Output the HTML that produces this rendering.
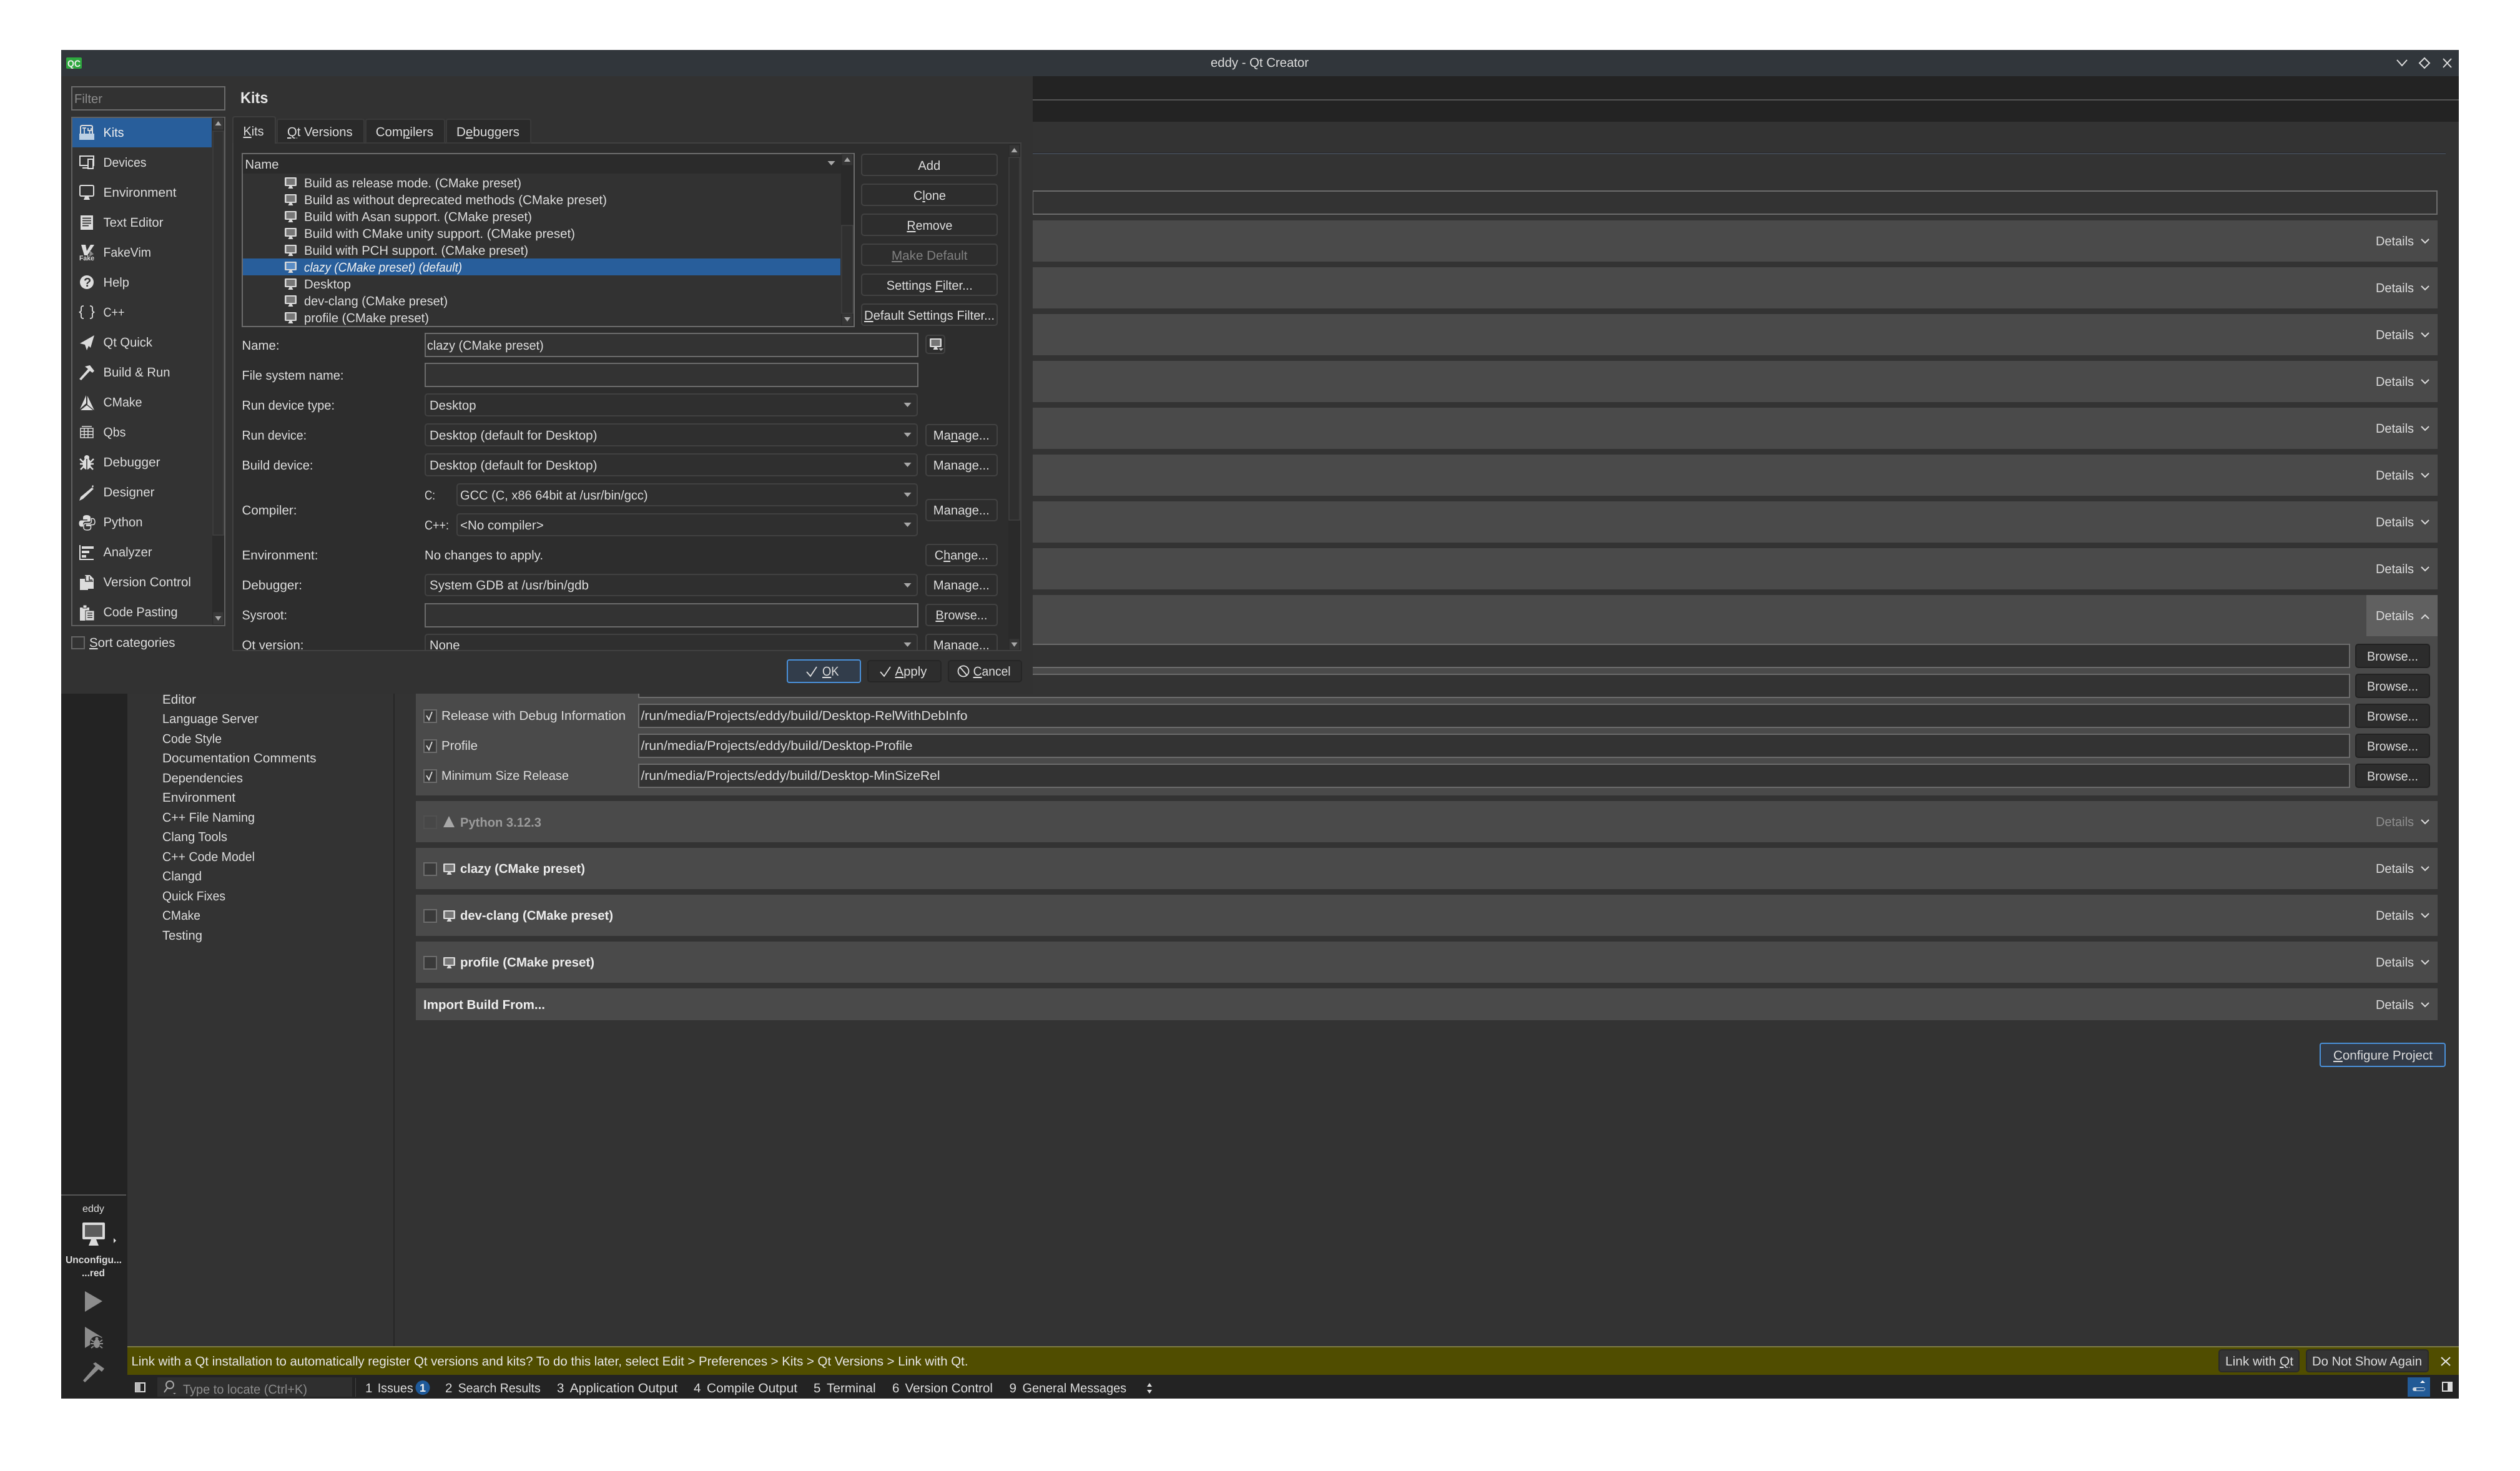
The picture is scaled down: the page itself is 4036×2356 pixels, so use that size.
<!DOCTYPE html>
<html><head><meta charset="utf-8"><title>eddy - Qt Creator</title>
<style>
html,body{margin:0;padding:0;background:#fff}
svg{display:block}
text{font-family:"Liberation Sans",Arial,sans-serif;font-size:20.5px;fill:#dcdcdc;text-rendering:geometricPrecision;white-space:pre}
.u{text-decoration:underline}
.bo{font-weight:bold}
.g{fill:#8c8c8c}
.w{fill:#f0f0f0}
.b{fill:#2d2d2d;stroke:#424242;stroke-width:2}
.bd{fill:#2c2c2c;stroke:#222;stroke-width:2}
.cb{fill:#2f2f2f;stroke:#414141;stroke-width:2}
.in{fill:#333;stroke:#6c6c6c;stroke-width:2}
.p{fill:#4a4a4a}
.ar{fill:#a8a8a8}
.ic{fill:#dcdcdc}
.st{fill:none;stroke:#dcdcdc;stroke-width:2}
.ch{fill:none;stroke:#dcdcdc;stroke-width:2}
.ck{fill:#3a3a3a;stroke:#6c6c6c;stroke-width:2}
</style></head><body>
<svg xmlns="http://www.w3.org/2000/svg" width="4036" height="2356" viewBox="0 0 4036 2356">
<defs>
<symbol id="mon" viewBox="0 0 19 18" width="19" height="18"><rect x="0" y="0" width="19" height="14" rx="1.5" fill="#dadada"/><rect x="2.5" y="2" width="14" height="10" style="fill:var(--m,#767676)"/><path d="M7.5 14h4l2 4h-8z" fill="#dadada"/></symbol>
<symbol id="dn" viewBox="0 0 14 8" width="14" height="8" overflow="visible"><path d="M1 1l6 6 6-6" fill="none" stroke="#dcdcdc" stroke-width="2"/></symbol>
</defs>
<rect x="98" y="80" width="3840" height="2160" fill="#333"/>
<rect x="98" y="80" width="3840" height="42" fill="#31363b"/>
<rect x="106" y="92" width="25" height="18" rx="2" fill="#2ea83f"/>
<text x="108" y="107" style="font-size:15px;font-weight:bold" textLength="21" lengthAdjust="spacingAndGlyphs" class="w">QC</text>
<text x="1939" y="107" textLength="157" lengthAdjust="spacingAndGlyphs">eddy - Qt Creator</text>
<path d="M3839 96l8 9 8-9" fill="none" stroke="#dcdcdc" stroke-width="2"/>
<path d="M3883 93l8 8-8 8-8-8z" fill="none" stroke="#dcdcdc" stroke-width="2"/>
<path d="M3913 94l13 14M3926 94l-13 14" fill="none" stroke="#dcdcdc" stroke-width="2"/>

<!-- main window top strips -->
<rect x="1654" y="122" width="2284" height="73" fill="#232323"/>
<rect x="1654" y="159" width="2284" height="2" fill="#555"/>
<rect x="1654" y="244" width="2263" height="1" fill="#272727"/>
<rect x="1654" y="245" width="2263" height="2" fill="#414751"/>
<rect x="1654" y="306" width="2249" height="37" class="in"/>

<!-- panels -->
<rect x="1654" y="353" width="2250" height="66" class="p"/>
<rect x="1654" y="428" width="2250" height="66" class="p"/>
<rect x="1654" y="503" width="2250" height="66" class="p"/>
<rect x="1654" y="578" width="2250" height="66" class="p"/>
<rect x="1654" y="653" width="2250" height="66" class="p"/>
<rect x="1654" y="728" width="2250" height="66" class="p"/>
<rect x="1654" y="803" width="2250" height="66" class="p"/>
<rect x="1654" y="878" width="2250" height="66" class="p"/>
<rect x="666" y="953" width="3238" height="321" class="p"/>
<rect x="3790" y="953" width="114" height="66" fill="#606060"/>
<rect x="666" y="1283" width="3238" height="66" class="p"/>
<rect x="666" y="1358" width="3238" height="66" class="p"/>
<rect x="666" y="1433" width="3238" height="66" class="p"/>
<rect x="666" y="1508" width="3238" height="66" class="p"/>
<rect x="666" y="1583" width="3238" height="51" class="p"/>

<text x="3805" y="393" textLength="61" lengthAdjust="spacingAndGlyphs">Details</text><use href="#dn" x="3877" y="382"/>
<text x="3805" y="468" textLength="61" lengthAdjust="spacingAndGlyphs">Details</text><use href="#dn" x="3877" y="457"/>
<text x="3805" y="543" textLength="61" lengthAdjust="spacingAndGlyphs">Details</text><use href="#dn" x="3877" y="532"/>
<text x="3805" y="618" textLength="61" lengthAdjust="spacingAndGlyphs">Details</text><use href="#dn" x="3877" y="607"/>
<text x="3805" y="693" textLength="61" lengthAdjust="spacingAndGlyphs">Details</text><use href="#dn" x="3877" y="682"/>
<text x="3805" y="768" textLength="61" lengthAdjust="spacingAndGlyphs">Details</text><use href="#dn" x="3877" y="757"/>
<text x="3805" y="843" textLength="61" lengthAdjust="spacingAndGlyphs">Details</text><use href="#dn" x="3877" y="832"/>
<text x="3805" y="918" textLength="61" lengthAdjust="spacingAndGlyphs">Details</text><use href="#dn" x="3877" y="907"/>
<text x="3805" y="993" textLength="61" lengthAdjust="spacingAndGlyphs">Details</text><path d="M3878 991l6-6 6 6" fill="none" stroke="#dcdcdc" stroke-width="2"/>
<text x="3805" y="1323" textLength="61" lengthAdjust="spacingAndGlyphs" style="fill:#8f8f8f">Details</text><use href="#dn" x="3877" y="1312"/>
<text x="3805" y="1398" textLength="61" lengthAdjust="spacingAndGlyphs">Details</text><use href="#dn" x="3877" y="1387"/>
<text x="3805" y="1473" textLength="61" lengthAdjust="spacingAndGlyphs">Details</text><use href="#dn" x="3877" y="1462"/>
<text x="3805" y="1548" textLength="61" lengthAdjust="spacingAndGlyphs">Details</text><use href="#dn" x="3877" y="1537"/>
<text x="3805" y="1616" textLength="61" lengthAdjust="spacingAndGlyphs">Details</text><use href="#dn" x="3877" y="1605"/>

<!-- expanded rows -->
<rect x="1023" y="1032" width="2740" height="37" class="in"/><rect x="3773" y="1032" width="118" height="37" rx="4" class="bd"/><text x="3791" y="1058" textLength="82" lengthAdjust="spacingAndGlyphs">Browse...</text>
<rect x="1023" y="1080" width="2740" height="37" class="in"/><rect x="3773" y="1080" width="118" height="37" rx="4" class="bd"/><text x="3791" y="1106" textLength="82" lengthAdjust="spacingAndGlyphs">Browse...</text>
<rect x="1023" y="1128" width="2740" height="37" class="in"/><rect x="3773" y="1128" width="118" height="37" rx="4" class="bd"/><text x="3791" y="1154" textLength="82" lengthAdjust="spacingAndGlyphs">Browse...</text>
<rect x="1023" y="1176" width="2740" height="37" class="in"/><rect x="3773" y="1176" width="118" height="37" rx="4" class="bd"/><text x="3791" y="1202" textLength="82" lengthAdjust="spacingAndGlyphs">Browse...</text>
<rect x="1023" y="1224" width="2740" height="37" class="in"/><rect x="3773" y="1224" width="118" height="37" rx="4" class="bd"/><text x="3791" y="1250" textLength="82" lengthAdjust="spacingAndGlyphs">Browse...</text>
<text x="1026.5" y="1153" textLength="523" lengthAdjust="spacingAndGlyphs">/run/media/Projects/eddy/build/Desktop-RelWithDebInfo</text>
<text x="1026.5" y="1201" textLength="435" lengthAdjust="spacingAndGlyphs">/run/media/Projects/eddy/build/Desktop-Profile</text>
<text x="1026.5" y="1249" textLength="479" lengthAdjust="spacingAndGlyphs">/run/media/Projects/eddy/build/Desktop-MinSizeRel</text>
<rect x="679" y="1137" width="20" height="20" class="ck"/><path d="M683 1146l4 7 5-13" fill="none" stroke="#dcdcdc" stroke-width="1.8"/>
<rect x="679" y="1185" width="20" height="20" class="ck"/><path d="M683 1194l4 7 5-13" fill="none" stroke="#dcdcdc" stroke-width="1.8"/>
<rect x="679" y="1233" width="20" height="20" class="ck"/><path d="M683 1242l4 7 5-13" fill="none" stroke="#dcdcdc" stroke-width="1.8"/>
<text x="707" y="1153" textLength="295" lengthAdjust="spacingAndGlyphs">Release with Debug Information</text>
<text x="707" y="1201" textLength="58" lengthAdjust="spacingAndGlyphs">Profile</text>
<text x="707" y="1249" textLength="204" lengthAdjust="spacingAndGlyphs">Minimum Size Release</text>

<rect x="679" y="1307" width="20" height="20" fill="#474747" stroke="#505050" stroke-width="2"/>
<path d="M719 1307l9 18h-18z" fill="#a8a8a8"/>
<text x="737" y="1324" class="bo" textLength="130" lengthAdjust="spacingAndGlyphs" style="fill:#9a9a9a">Python 3.12.3</text>
<rect x="679" y="1382" width="20" height="20" class="ck"/><use href="#mon" x="710" y="1383"/><text x="737" y="1398" class="bo" textLength="200" lengthAdjust="spacingAndGlyphs" style="fill:#ececec">clazy (CMake preset)</text>
<rect x="679" y="1457" width="20" height="20" class="ck"/><use href="#mon" x="710" y="1458"/><text x="737" y="1473" class="bo" textLength="245" lengthAdjust="spacingAndGlyphs" style="fill:#ececec">dev-clang (CMake preset)</text>
<rect x="679" y="1532" width="20" height="20" class="ck"/><use href="#mon" x="710" y="1533"/><text x="737" y="1548" class="bo" textLength="215" lengthAdjust="spacingAndGlyphs" style="fill:#ececec">profile (CMake preset)</text>
<text x="678" y="1616" class="bo" textLength="195" lengthAdjust="spacingAndGlyphs" style="fill:#f0f0f0">Import Build From...</text>

<rect x="3716" y="1671" width="200" height="37" rx="3" fill="#333b47" stroke="#4a90d9" stroke-width="2"/>
<text x="3737" y="1697" textLength="159" lengthAdjust="spacingAndGlyphs"><tspan class="u">C</tspan>onfigure Project</text>

<!-- mode bar -->
<rect x="98" y="1111" width="106" height="1129" fill="#232323"/>
<rect x="630" y="1111" width="2" height="1045" fill="#272727"/>
<rect x="98" y="1913" width="104" height="2" fill="#555"/>
<text x="132" y="1941" style="font-size:16px" textLength="35" lengthAdjust="spacingAndGlyphs">eddy</text>
<rect x="132" y="1958" width="36" height="27" rx="2" fill="#dadada"/><rect x="136" y="1962" width="28" height="19" fill="#5c5c5c"/><path d="M146 1985h8l4 10h-16z" fill="#dadada"/>
<path d="M182 1983l4 4-4 4z" fill="#dcdcdc"/>
<text x="105" y="2023" class="bo" style="font-size:16px" textLength="90" lengthAdjust="spacingAndGlyphs">Unconfigu...</text>
<text x="131" y="2044" class="bo" style="font-size:16px" textLength="37" lengthAdjust="spacingAndGlyphs">...red</text>
<path d="M136 2068l28 16-28 17z" fill="#8c8c8c"/>
<path d="M136 2125l28 17-28 17z" fill="#8c8c8c"/>
<ellipse cx="155" cy="2151" rx="11" ry="11" fill="#232323"/>
<ellipse cx="155" cy="2152" rx="5" ry="7" fill="#8c8c8c"/><circle cx="155" cy="2144" r="2.500" fill="#8c8c8c"/>
<path d="M146 2146l4 3M164 2146l-4 3M145 2152h5M165 2152h-5M146 2159l4-3M164 2159l-4-3" stroke="#8c8c8c" stroke-width="2"/>
<path d="M133 2211l20-23-4-4 4-2 14 10-4 5-5-4-22 21z" fill="#8c8c8c"/>

<!-- editor list -->
<text x="260" y="1127" textLength="54" lengthAdjust="spacingAndGlyphs">Editor</text>
<text x="260" y="1158" textLength="154" lengthAdjust="spacingAndGlyphs">Language Server</text>
<text x="260" y="1190" textLength="95" lengthAdjust="spacingAndGlyphs">Code Style</text>
<text x="260" y="1221" textLength="246.5" lengthAdjust="spacingAndGlyphs">Documentation Comments</text>
<text x="260" y="1253" textLength="129" lengthAdjust="spacingAndGlyphs">Dependencies</text>
<text x="260" y="1284" textLength="117" lengthAdjust="spacingAndGlyphs">Environment</text>
<text x="260" y="1316" textLength="148" lengthAdjust="spacingAndGlyphs">C++ File Naming</text>
<text x="260" y="1347" textLength="104" lengthAdjust="spacingAndGlyphs">Clang Tools</text>
<text x="260" y="1379" textLength="148" lengthAdjust="spacingAndGlyphs">C++ Code Model</text>
<text x="260" y="1410" textLength="63" lengthAdjust="spacingAndGlyphs">Clangd</text>
<text x="260" y="1442" textLength="101" lengthAdjust="spacingAndGlyphs">Quick Fixes</text>
<text x="260" y="1473" textLength="61" lengthAdjust="spacingAndGlyphs">CMake</text>
<text x="260" y="1505" textLength="64" lengthAdjust="spacingAndGlyphs">Testing</text>

<!-- info bar -->
<rect x="204" y="2156" width="3734" height="46" fill="#504d00"/>
<rect x="204" y="2156" width="3734" height="2" fill="#7d7b45"/>
<text x="210.5" y="2187" textLength="1340" lengthAdjust="spacingAndGlyphs" style="fill:#e6e6e6">Link with a Qt installation to automatically register Qt versions and kits? To do this later, select Edit &gt; Preferences &gt; Kits &gt; Qt Versions &gt; Link with Qt.</text>
<rect x="3554" y="2162" width="128" height="35" rx="4" fill="#343434" stroke="#2a2a2a" stroke-width="2"/>
<text x="3564" y="2187" textLength="109" lengthAdjust="spacingAndGlyphs">Link with <tspan class="u">Q</tspan>t</text>
<rect x="3694" y="2162" width="195" height="35" rx="4" fill="#343434" stroke="#2a2a2a" stroke-width="2"/>
<text x="3703" y="2187" textLength="176" lengthAdjust="spacingAndGlyphs">Do Not Show Again</text>
<path d="M3910 2174l14 13M3924 2174l-14 13" fill="none" stroke="#e6e6e6" stroke-width="2"/>

<!-- status bar -->
<rect x="204" y="2202" width="3734" height="38" fill="#232323"/>
<rect x="217" y="2215" width="15" height="14" fill="#232323" stroke="#dcdcdc" stroke-width="2"/><rect x="217" y="2215" width="8" height="14" fill="#b8b8b8"/>
<rect x="252" y="2206" width="312" height="31" fill="#2f2f2f"/>
<circle cx="272" cy="2218" r="6" fill="none" stroke="#a8a8a8" stroke-width="2"/><path d="M268 2223l-5 7" stroke="#a8a8a8" stroke-width="2"/><path d="M277 2231h5l-2.500 2z" fill="#a8a8a8"/>
<text x="293" y="2232" textLength="199" lengthAdjust="spacingAndGlyphs" class="g">Type to locate (Ctrl+K)</text>
<rect x="569" y="2207" width="1" height="30" fill="#444"/>
<text x="585" y="2230">1</text><text x="604.7" y="2230" textLength="57" lengthAdjust="spacingAndGlyphs">Issues</text>
<circle cx="677" cy="2222.500" r="11.500" fill="#1f5a9a"/><text x="672" y="2229" class="bo" style="font-size:18px;fill:#eee">1</text>
<text x="713" y="2230">2</text><text x="733.7" y="2230" textLength="132" lengthAdjust="spacingAndGlyphs">Search Results</text>
<text x="892" y="2230">3</text><text x="912.6" y="2230" textLength="172.600" lengthAdjust="spacingAndGlyphs">Application Output</text>
<text x="1111" y="2230">4</text><text x="1132" y="2230" textLength="145" lengthAdjust="spacingAndGlyphs">Compile Output</text>
<text x="1303" y="2230">5</text><text x="1324" y="2230" textLength="78.600" lengthAdjust="spacingAndGlyphs">Terminal</text>
<text x="1429" y="2230">6</text><text x="1449.5" y="2230" textLength="140.500" lengthAdjust="spacingAndGlyphs">Version Control</text>
<text x="1616.5" y="2230">9</text><text x="1637.5" y="2230" textLength="166.600" lengthAdjust="spacingAndGlyphs">General Messages</text>
<path d="M1841 2215l4 6h-8zM1841 2232l4-6h-8z" fill="#dcdcdc"/>
<rect x="3856" y="2206" width="36" height="31" fill="#225a96"/>
<rect x="3864" y="2222" width="20" height="6" rx="3" fill="#cfd8e2"/><rect x="3870" y="2223" width="13" height="4" fill="#2a5f9a"/>
<path d="M3880 2211l4 4h-8z" fill="#fff"/>
<rect x="3912" y="2214" width="15" height="14" fill="#232323" stroke="#dcdcdc" stroke-width="2"/><rect x="3920" y="2214" width="8" height="15" fill="#dcdcdc"/>

<!-- ================= DIALOG ================= -->
<rect x="98" y="122" width="1556" height="989" fill="#323232"/>
<rect x="115" y="139" width="245" height="37" fill="#323232" stroke="#6c6c6c" stroke-width="2"/>
<text x="119" y="165" class="g" textLength="45" lengthAdjust="spacingAndGlyphs">Filter</text>
<text x="385" y="165" class="bo" style="font-size:25px;fill:#e6e6e6" textLength="44.500" lengthAdjust="spacingAndGlyphs">Kits</text>

<!-- category list -->
<rect x="115" y="188" width="245" height="814" fill="#333" stroke="#606060" stroke-width="2"/>
<rect x="116" y="189" width="223" height="47" fill="#285e9b"/>
<rect x="340" y="189" width="19" height="812" fill="#2b2b2b"/>
<rect x="341" y="189" width="17" height="19" fill="#393939" stroke="#2a2a2a"/>
<path d="M349.500 194l5 7h-10z" fill="#a8a8a8"/>
<rect x="341" y="210" width="17" height="647" fill="#323232" stroke="#414141" stroke-width="1.500"/>
<rect x="341" y="980" width="17" height="20" fill="#393939" stroke="#2a2a2a"/>
<path d="M349.500 994l5-7h-10z" fill="#a8a8a8"/>

<text x="165.5" y="219" textLength="33" lengthAdjust="spacingAndGlyphs" class="w">Kits</text>
<text x="165.5" y="267" textLength="69" lengthAdjust="spacingAndGlyphs">Devices</text>
<text x="165.5" y="315" textLength="117" lengthAdjust="spacingAndGlyphs">Environment</text>
<text x="165.5" y="363" textLength="96" lengthAdjust="spacingAndGlyphs">Text Editor</text>
<text x="165.5" y="411" textLength="76.500" lengthAdjust="spacingAndGlyphs">FakeVim</text>
<text x="165.5" y="459" textLength="41.500" lengthAdjust="spacingAndGlyphs">Help</text>
<text x="165.5" y="507" textLength="34" lengthAdjust="spacingAndGlyphs">C++</text>
<text x="165.5" y="555" textLength="78.500" lengthAdjust="spacingAndGlyphs">Qt Quick</text>
<text x="165.5" y="603" textLength="107" lengthAdjust="spacingAndGlyphs">Build &amp; Run</text>
<text x="165.5" y="651" textLength="62" lengthAdjust="spacingAndGlyphs">CMake</text>
<text x="165.5" y="699" textLength="36" lengthAdjust="spacingAndGlyphs">Qbs</text>
<text x="165.5" y="747" textLength="91" lengthAdjust="spacingAndGlyphs">Debugger</text>
<text x="165.5" y="795" textLength="82" lengthAdjust="spacingAndGlyphs">Designer</text>
<text x="165.5" y="843" textLength="63" lengthAdjust="spacingAndGlyphs">Python</text>
<text x="165.5" y="891" textLength="78" lengthAdjust="spacingAndGlyphs">Analyzer</text>
<text x="165.5" y="939" textLength="140.500" lengthAdjust="spacingAndGlyphs">Version Control</text>
<text x="165.5" y="987" textLength="119" lengthAdjust="spacingAndGlyphs">Code Pasting</text>

<!-- category icons -->
<g transform="translate(127,200)"><path d="M2 14V3.500Q2 1 5 1h13q3 0 3 2.500V14" fill="none" stroke="#dcdcdc" stroke-width="2"/><rect x="0" y="14" width="24" height="10" fill="#bcd0e4"/><path d="M5 5h6M8 5v9M14 5v4h5V5M16.500 9v5" fill="none" stroke="#dcdcdc" stroke-width="1.800"/></g>
<g transform="translate(127,248)"><rect x="1" y="2" width="22" height="15" class="st"/><rect x="14" y="7" width="8" height="15" fill="#333" stroke="#dcdcdc" stroke-width="2"/><path d="M5 21h9" stroke="#dcdcdc" stroke-width="2"/></g>
<g transform="translate(127,296)"><rect x="1" y="1" width="22" height="17" rx="2" class="st"/><path d="M9 19h6l2 5H7z" class="ic"/></g>
<g transform="translate(127,344)"><rect x="2" y="1" width="20" height="23" class="ic"/><path d="M5 5.500h14M5 9.500h14M5 13.500h14M5 17.500h10" stroke="#333" stroke-width="1.800"/></g>
<g transform="translate(127,392)"><path d="M3 0h7l2 10 6-10h6L13 17H8z" class="ic"/><path d="M17 9l6 6-7 4z" fill="#888"/><text x="0" y="25" class="bo" style="font-size:11px" textLength="24" lengthAdjust="spacingAndGlyphs">Fake</text></g>
<g transform="translate(127,440)"><circle cx="12" cy="12" r="11" class="ic"/><text x="7" y="19" class="bo" style="font-size:20px;fill:#333">?</text></g>
<g transform="translate(127,488)"><path d="M7 2Q3 2 3 5V10L0.500 12 3 14v5q0 3 4 3M17 2q4 0 4 3V10l2.500 2L21 14v5q0 3-4 3" fill="none" stroke="#dcdcdc" stroke-width="1.800"/></g>
<g transform="translate(127,536)"><path d="M24 1L1 14l8 2 3 9 3-7 3 3z" class="ic"/></g>
<g transform="translate(127,585)"><path d="M9 2l8-2 7 9-3 3-4-3L3 24 0 22 14 6z" class="ic"/></g>
<g transform="translate(127,633)"><path d="M11 0v13L1 22zM13 1l11 23-11-9zM2 24l10-8 10 8z" class="ic"/></g>
<g transform="translate(127,681)"><path d="M2 5h20v15H2zM2 10h20M2 15h20M8 5v15M14 5v15M4 2h16" fill="none" stroke="#dcdcdc" stroke-width="1.500"/></g>
<g transform="translate(127,729)"><ellipse cx="12" cy="14" rx="6.500" ry="9" class="ic"/><circle cx="12" cy="4" r="4" class="ic"/><path d="M1 6l5 5M23 6l-5 5M1 14h5M23 14h-5M2 23l5-5M22 23l-5-5" stroke="#dcdcdc" stroke-width="2.500"/><path d="M12 6v17" stroke="#333" stroke-width="1.500"/></g>
<g transform="translate(127,777)"><path d="M20 4l3 2L6 22 0 25l2-6zM21 0l2 1-1 3-2-1z" class="ic"/></g>
<g transform="translate(127,825)"><path d="M12 0c-5 0-6 2-6 4v3h7v1.500H3c-3 0-3.500 3-3.500 5s1 5 3.500 5h3v-4c0-2 1-4 4-4h5c2 0 3-1 3-3V4c0-2-2-4-6-4z" class="ic"/><path d="M12.500 24c5 0 6-2 6-4v-3h-7v-1.500h10c3 0 3.500-3 3.500-5s-1-5-3.500-5h-2v4c0 2-1 4-4 4h-5c-2 0-3.500 1-3.500 3v4c0 2 2 3.500 6 3.500z" fill="none" stroke="#dcdcdc" stroke-width="1.500"/></g>
<g transform="translate(127,873)"><path d="M1 0v23h22" class="st"/><rect x="4" y="2" width="19" height="4" class="ic"/><rect x="4" y="9" width="12" height="4" class="ic"/><rect x="4" y="16" width="7" height="4" class="ic"/></g>
<g transform="translate(127,921)"><path d="M1 6h8v-6h8l6 6v16H14v2H1z" class="ic"/><path d="M10 1v9h12" fill="none" stroke="#333" stroke-width="1.500"/><path d="M16 2v6h5" fill="none" stroke="#333" stroke-width="1.500"/></g>
<g transform="translate(127,969)"><rect x="1" y="4" width="15" height="21" class="ic"/><rect x="6" y="0" width="6" height="5" fill="#dcdcdc" stroke="#333"/><rect x="10" y="9" width="14" height="16" class="ic" stroke="#333"/><path d="M13 13h8M13 16.500h8M13 20h8" stroke="#333" stroke-width="1.500"/></g>

<!-- sort categories -->
<rect x="115" y="1020" width="20" height="19" fill="#333" stroke="#666" stroke-width="2"/>
<text x="143" y="1036" textLength="137.500" lengthAdjust="spacingAndGlyphs"><tspan class="u">S</tspan>ort categories</text>

<!-- tabs + pane -->
<rect x="373" y="229" width="1262" height="813" fill="#2d2d2d" stroke="#414141" stroke-width="2"/>
<path d="M373 229V190q0-3 3-3h62q3 0 3 3v40" fill="#2d2d2d" stroke="#3e3e3e" stroke-width="2"/>
<rect x="374" y="228" width="66" height="3" fill="#2d2d2d"/>
<path d="M444 229V194q0-3 3-3h133q3 0 3 3v35z" fill="#2a2a2a" stroke="#3a3a3a" stroke-width="2"/>
<path d="M586 229V194q0-3 3-3h120q3 0 3 3v35z" fill="#2a2a2a" stroke="#3a3a3a" stroke-width="2"/>
<path d="M715 229V194q0-3 3-3h129q3 0 3 3v35z" fill="#2a2a2a" stroke="#3a3a3a" stroke-width="2"/>
<text x="389.5" y="217" textLength="33" lengthAdjust="spacingAndGlyphs"><tspan class="u">K</tspan>its</text>
<text x="460" y="218" textLength="104.600" lengthAdjust="spacingAndGlyphs"><tspan class="u">Q</tspan>t Versions</text>
<text x="601.7" y="218" textLength="92.300" lengthAdjust="spacingAndGlyphs">Com<tspan class="u">p</tspan>ilers</text>
<text x="731" y="218" textLength="101" lengthAdjust="spacingAndGlyphs">D<tspan class="u">e</tspan>buggers</text>

<!-- pane scrollbar -->
<rect x="1615" y="231" width="19" height="811" fill="#2a2a2a"/>
<rect x="1616" y="232" width="17" height="18" fill="#363636" stroke="#2a2a2a"/><path d="M1624.500 237l5 7h-10z" fill="#a8a8a8"/>
<rect x="1616" y="252" width="17" height="581" fill="#2f2f2f" stroke="#414141" stroke-width="1.500"/>
<rect x="1616" y="1023" width="17" height="18" fill="#363636" stroke="#2a2a2a"/><path d="M1624.500 1036l5-7h-10z" fill="#a8a8a8"/>

<!-- tree -->
<rect x="388" y="246" width="980" height="277" fill="#323232" stroke="#6c6c6c" stroke-width="2"/>
<rect x="389" y="247" width="958" height="31" fill="#2b2b2b"/>
<text x="392.5" y="270" textLength="54" lengthAdjust="spacingAndGlyphs">Name</text>
<path d="M1331.500 265l6-7h-12z" fill="#a8a8a8"/>
<rect x="1347" y="247" width="20" height="275" fill="#2a2a2a"/>
<rect x="1348" y="247" width="18" height="18" fill="#363636" stroke="#2a2a2a"/><path d="M1357 252l5 7h-10z" fill="#a8a8a8"/>
<rect x="1348" y="361" width="18" height="141" fill="#303030" stroke="#414141" stroke-width="1.500"/>
<rect x="1348" y="503" width="18" height="18" fill="#363636" stroke="#2a2a2a"/><path d="M1357 515l5-7h-10z" fill="#a8a8a8"/>
<rect x="389" y="414" width="957" height="27" fill="#285e9b"/>
<use href="#mon" x="456" y="284"/><text x="487" y="300" textLength="348" lengthAdjust="spacingAndGlyphs">Build as release mode. (CMake preset)</text>
<use href="#mon" x="456" y="311"/><text x="487" y="327" textLength="485" lengthAdjust="spacingAndGlyphs">Build as without deprecated methods (CMake preset)</text>
<use href="#mon" x="456" y="338"/><text x="487" y="354" textLength="365" lengthAdjust="spacingAndGlyphs">Build with Asan support. (CMake preset)</text>
<use href="#mon" x="456" y="365"/><text x="487" y="381" textLength="434" lengthAdjust="spacingAndGlyphs">Build with CMake unity support. (CMake preset)</text>
<use href="#mon" x="456" y="392"/><text x="487" y="408" textLength="359" lengthAdjust="spacingAndGlyphs">Build with PCH support. (CMake preset)</text>
<use href="#mon" x="456" y="419" style="--m:#5a8cc4"/><text x="487" y="435" font-style="italic" class="w" textLength="253" lengthAdjust="spacingAndGlyphs">clazy (CMake preset) (default)</text>
<use href="#mon" x="456" y="446"/><text x="487" y="462" textLength="75" lengthAdjust="spacingAndGlyphs">Desktop</text>
<use href="#mon" x="456" y="473"/><text x="487" y="489" textLength="230" lengthAdjust="spacingAndGlyphs">dev-clang (CMake preset)</text>
<use href="#mon" x="456" y="500"/><text x="487" y="516" textLength="200" lengthAdjust="spacingAndGlyphs">profile (CMake preset)</text>

<!-- side buttons -->
<rect x="1380" y="247" width="217" height="34" rx="4" class="b"/><text x="1470.3" y="272" textLength="36" lengthAdjust="spacingAndGlyphs">Add</text>
<rect x="1380" y="295" width="217" height="34" rx="4" class="b"/><text x="1463" y="320" textLength="52" lengthAdjust="spacingAndGlyphs">C<tspan class="u">l</tspan>one</text>
<rect x="1380" y="343" width="217" height="34" rx="4" class="b"/><text x="1452.4" y="368" textLength="73" lengthAdjust="spacingAndGlyphs"><tspan class="u">R</tspan>emove</text>
<rect x="1380" y="391" width="217" height="34" rx="4" class="b"/><text x="1428" y="416" textLength="121.500" lengthAdjust="spacingAndGlyphs" style="fill:#808080"><tspan class="u">M</tspan>ake Default</text>
<rect x="1380" y="439" width="217" height="34" rx="4" class="b"/><text x="1419.8" y="464" textLength="138" lengthAdjust="spacingAndGlyphs">Settings <tspan class="u">F</tspan>ilter...</text>
<rect x="1380" y="487" width="217" height="34" rx="4" class="b"/><text x="1384" y="512" textLength="209" lengthAdjust="spacingAndGlyphs"><tspan class="u">D</tspan>efault Settings Filter...</text>

<!-- form -->
<text x="387.5" y="560" textLength="60" lengthAdjust="spacingAndGlyphs">Name:</text>
<rect x="681" y="534" width="789" height="37" class="in"/>
<text x="684" y="560" textLength="186.700" lengthAdjust="spacingAndGlyphs">clazy (CMake preset)</text>
<rect x="1483" y="537" width="30" height="29" rx="4" class="b"/><use href="#mon" x="1489" y="542"/><path d="M1503 558h8l-4 4z" fill="#a8a8a8"/>

<text x="387.5" y="608" textLength="163" lengthAdjust="spacingAndGlyphs">File system name:</text>
<rect x="681" y="582" width="789" height="37" class="in"/>

<text x="387.5" y="656" textLength="148.500" lengthAdjust="spacingAndGlyphs">Run device type:</text>
<rect x="681" y="631" width="788" height="35" rx="4" class="cb"/><text x="688" y="656" textLength="74.500" lengthAdjust="spacingAndGlyphs">Desktop</text><path d="M1453.500 652l6-7h-12z" class="ar"/>

<text x="387.5" y="704" textLength="103.600" lengthAdjust="spacingAndGlyphs">Run device:</text>
<rect x="681" y="679" width="788" height="35" rx="4" class="cb"/><text x="688" y="704" textLength="268.500" lengthAdjust="spacingAndGlyphs">Desktop (default for Desktop)</text><path d="M1453.500 700l6-7h-12z" class="ar"/>
<rect x="1483" y="680" width="114" height="34" rx="4" class="b"/><text x="1494.8" y="704" textLength="90" lengthAdjust="spacingAndGlyphs">Ma<tspan class="u">n</tspan>age...</text>

<text x="387.5" y="752" textLength="114" lengthAdjust="spacingAndGlyphs">Build device:</text>
<rect x="681" y="727" width="788" height="35" rx="4" class="cb"/><text x="688" y="752" textLength="268.500" lengthAdjust="spacingAndGlyphs">Desktop (default for Desktop)</text><path d="M1453.500 748l6-7h-12z" class="ar"/>
<rect x="1483" y="728" width="114" height="34" rx="4" class="b"/><text x="1494.8" y="752" textLength="90" lengthAdjust="spacingAndGlyphs">Mana<tspan class="u">g</tspan>e...</text>

<text x="680" y="800" textLength="17" lengthAdjust="spacingAndGlyphs">C:</text>
<rect x="732" y="775" width="737" height="35" rx="4" class="cb"/><text x="737" y="800" textLength="300.600" lengthAdjust="spacingAndGlyphs">GCC (C, x86 64bit at /usr/bin/gcc)</text><path d="M1453.500 796l6-7h-12z" class="ar"/>
<text x="387.5" y="824" textLength="88" lengthAdjust="spacingAndGlyphs">Compiler:</text>
<rect x="1483" y="800" width="114" height="34" rx="4" class="b"/><text x="1494.8" y="824" textLength="90" lengthAdjust="spacingAndGlyphs">Manage...</text>
<text x="680" y="848" textLength="39" lengthAdjust="spacingAndGlyphs">C++:</text>
<rect x="732" y="823" width="737" height="35" rx="4" class="cb"/><text x="737" y="848" textLength="133.700" lengthAdjust="spacingAndGlyphs">&lt;No compiler&gt;</text><path d="M1453.500 844l6-7h-12z" class="ar"/>

<text x="387.5" y="896" textLength="122" lengthAdjust="spacingAndGlyphs">Environment:</text>
<text x="680" y="896" textLength="190" lengthAdjust="spacingAndGlyphs">No changes to apply.</text>
<rect x="1483" y="872" width="114" height="34" rx="4" class="b"/><text x="1496.8" y="896" textLength="86" lengthAdjust="spacingAndGlyphs">C<tspan class="u">h</tspan>ange...</text>

<text x="387.5" y="944" textLength="96.500" lengthAdjust="spacingAndGlyphs">Debugger:</text>
<rect x="681" y="920" width="788" height="34" rx="4" class="cb"/><text x="688" y="944" textLength="255" lengthAdjust="spacingAndGlyphs">System GDB at /usr/bin/gdb</text><path d="M1453.500 941l6-7h-12z" class="ar"/>
<rect x="1483" y="920" width="114" height="34" rx="4" class="b"/><text x="1494.8" y="944" textLength="90" lengthAdjust="spacingAndGlyphs">Manage...</text>

<text x="387.5" y="992" textLength="72.500" lengthAdjust="spacingAndGlyphs">Sysroot:</text>
<rect x="681" y="967" width="789" height="37" class="in"/>
<rect x="1483" y="968" width="114" height="34" rx="4" class="b"/><text x="1498.4" y="992" textLength="83" lengthAdjust="spacingAndGlyphs"><tspan class="u">B</tspan>rowse...</text>

<text x="387.5" y="1040" textLength="99" lengthAdjust="spacingAndGlyphs">Qt version:</text>
<rect x="681" y="1016" width="788" height="35" rx="4" class="cb"/><text x="688" y="1040" textLength="48.500" lengthAdjust="spacingAndGlyphs">None</text><path d="M1453.500 1036l6-7h-12z" class="ar"/>
<rect x="1483" y="1016" width="114" height="35" rx="4" class="b"/><text x="1494.8" y="1040" textLength="90" lengthAdjust="spacingAndGlyphs">Manage...</text>

<!-- clip bottom of pane -->
<rect x="372" y="1041" width="1264" height="2" fill="#414141"/>
<rect x="372" y="1043" width="1282" height="68" fill="#323232"/>

<!-- dialog buttons -->
<rect x="1261" y="1057" width="117" height="36" rx="3" fill="#323d4b" stroke="#4a90d9" stroke-width="2"/>
<path d="M1292 1076l6 7 10-15" fill="none" stroke="#dcdcdc" stroke-width="1.800"/>
<text x="1317" y="1082" textLength="26.500" lengthAdjust="spacingAndGlyphs"><tspan class="u">O</tspan>K</text>
<rect x="1390" y="1058" width="117" height="34" rx="4" class="b" style="stroke:#262626"/>
<path d="M1410 1076l6 7 10-15" fill="none" stroke="#dcdcdc" stroke-width="1.800"/>
<text x="1433.5" y="1082" textLength="51" lengthAdjust="spacingAndGlyphs"><tspan class="u">A</tspan>pply</text>
<rect x="1519" y="1058" width="117" height="34" rx="4" class="b" style="stroke:#262626"/>
<ellipse cx="1543" cy="1075" rx="8.500" ry="8.500" fill="none" stroke="#dcdcdc" stroke-width="1.800"/><path d="M1537 1068l12 14" stroke="#dcdcdc" stroke-width="1.800"/>
<text x="1558.6" y="1082" textLength="60" lengthAdjust="spacingAndGlyphs"><tspan class="u">C</tspan>ancel</text>
</svg>
</body></html>
